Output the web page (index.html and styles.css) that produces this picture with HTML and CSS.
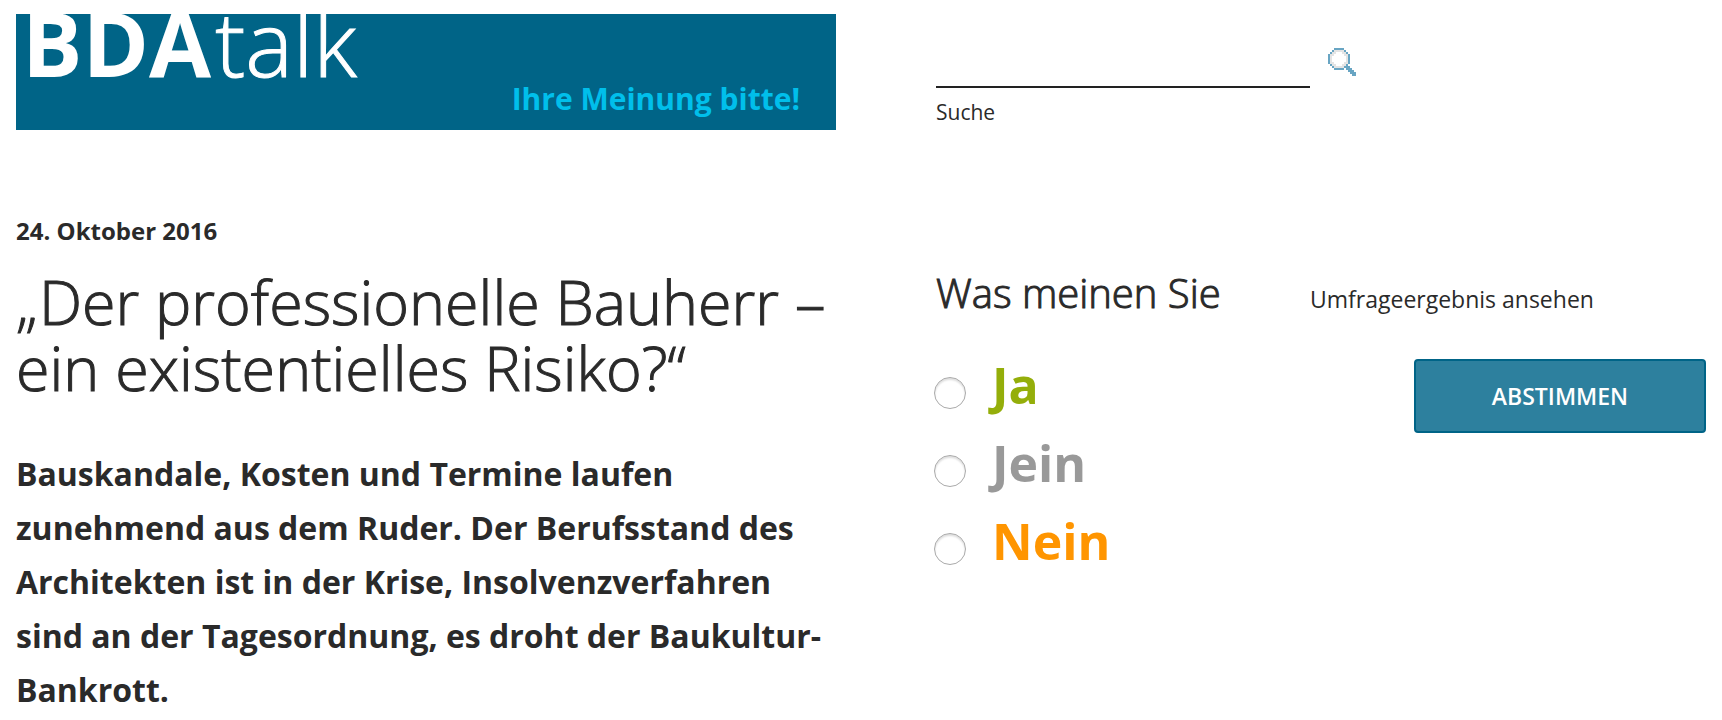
FILE: index.html
```
<!DOCTYPE html>
<html lang="de">
<head>
    <meta charset="UTF-8">
    <meta name="viewport" content="width=device-width, initial-scale=1.0">
    <title>BDA talk</title>
    <link rel="stylesheet" href="styles.css">
</head>
<body>

    <div class="page">
        <header class="banner">
            <a href="#" class="logo"><strong>BDA</strong>talk</a>
            <p class="tagline">Ihre Meinung bitte!</p>
        </header>

        <form class="search">
            <div class="search-row">
                <input type="text" id="search" class="search-input">
                <button type="submit" class="search-button" aria-label="Suchen">
                    <svg width="28" height="28" viewBox="0 0 14 14" shape-rendering="crispEdges">
                        <path fill="#e4e4e4" d="M3 1h5v1h1v1h1v5h-1v1h-1v1h-5v-1h-1v-1h-1v-5h1v-1h1z"/>
                        <path fill="#fff" d="M4 2h3v1h1v1h1v3h-1v1h-1v1h-3v-1h-1v-1h-1v-3h1v-1h1z"/>
                        <path fill="#68a5c3" d="M3 0h5v1h-5zM2 1h1v1h-1zM8 1h1v1h-1zM1 2h1v1h-1zM9 2h1v1h-1zM0 3h1v5h-1zM10 3h1v5h-1zM1 8h1v1h-1zM9 8h1v1h-1zM2 9h1v1h-1zM8 9h1v1h-1zM3 10h5v1h-5zM9 9h2v1h1v1h1v1h1v2h-2v-1h-1v-1h-1v-1h-1z"/>
                    </svg>
                </button>
            </div>
            <label for="search">Suche</label>
        </form>

        <article class="article">
            <p class="date">24. Oktober 2016</p>
            <h1>„Der professionelle Bauherr – ein existentielles Risiko?“</h1>
            <p class="intro">Bauskandale, Kosten und Termine laufen zunehmend aus dem Ruder. Der Berufsstand des Architekten ist in der Krise, Insolvenzverfahren sind an der Tagesordnung, es droht der Baukultur-Bankrott.</p>
        </article>

        <form class="poll">
            <div class="poll-head">
                <h2>Was meinen Sie</h2>
                <a href="#">Umfrageergebnis ansehen</a>
            </div>
            <div class="poll-body">
                <div class="options">
                    <label class="option yes"><input type="radio" name="vote" value="ja"><span>Ja</span></label>
                    <label class="option maybe"><input type="radio" name="vote" value="jein"><span>Jein</span></label>
                    <label class="option no"><input type="radio" name="vote" value="nein"><span>Nein</span></label>
                </div>
                <button type="submit" class="vote-button">ABSTIMMEN</button>
            </div>
        </form>
    </div>

</body>
</html>
```
FILE: styles.css
```
* {
    box-sizing: border-box;
}
body {
    margin: 0;
    font-family: "Open Sans", "Noto Sans", sans-serif;
    font-size: 23px;
    background-color: #fff;
    color: #2a2a2a;
}
h1, h2, p {
    margin: 0;
}
a {
    color: inherit;
    text-decoration: none;
}
.page {
    display: grid;
    grid-template-columns: 820fr 770fr;
    column-gap: 100px;
    row-gap: 77px;
    padding: 14px 16px 0;
}

/* Banner */
.banner {
    height: 116px;
    overflow: hidden;
    background-color: #006487;
}
.logo {
    display: block;
    padding-left: 6px;
    font-size: 90px;
    font-weight: 300;
    line-height: 56px;
    color: #fff;
    -webkit-text-stroke: 1px;
}
.logo strong {
    margin-right: 4px;
    font-weight: 700;
    -webkit-text-stroke: 0;
}
.tagline {
    padding-right: 36px;
    font-size: 30px;
    font-weight: 700;
    line-height: 58px;
    text-align: right;
    color: #00bfeb;
}

/* Search */
.search-row {
    display: flex;
    align-items: center;
    gap: 18px;
}
.search-input {
    width: 374px;
    height: 74px;
    padding: 24px 0 0;
    border: none;
    border-bottom: 2px solid #222;
    font: inherit;
    outline: none;
}
.search-button {
    padding: 22px 0 0;
    border: none;
    background: none;
    cursor: pointer;
}
.search-button svg {
    display: block;
}
.search label {
    display: block;
    font-size: 21px;
    line-height: 48px;
}

/* Article */
.date {
    font-size: 24px;
    font-weight: 700;
    line-height: 36px;
}
h1 {
    margin-top: 20px;
    font-size: 61px;
    font-weight: 300;
    line-height: 66px;
    -webkit-text-stroke: 1px;
}
.intro {
    margin-top: 46px;
    font-size: 32px;
    font-weight: 700;
    line-height: 54px;
}

/* Poll */
.poll {
    padding-top: 56px;
}
.poll-head {
    display: flex;
    align-items: baseline;
}
.poll-head h2 {
    flex: 0 0 374px;
    font-size: 40px;
    font-weight: 300;
    line-height: 48px;
    -webkit-text-stroke: 1px;
}
.poll-body {
    display: flex;
    justify-content: space-between;
    align-items: flex-start;
    margin-top: 42px;
}
.option {
    display: flex;
    align-items: flex-start;
    gap: 26px;
    height: 78px;
    font-size: 50px;
    font-weight: 700;
    line-height: 52px;
    cursor: pointer;
}
.option input {
    appearance: none;
    width: 32px;
    height: 32px;
    margin: 18px 0 0 -2px;
    border: 1px solid #aaa;
    border-radius: 50%;
    box-shadow: inset 0 2px 2px #ddd;
}
.option input:checked {
    background-color: #2d809e;
}
.yes {
    color: #94ae0a;
}
.maybe {
    color: #999;
}
.no {
    color: #ff9500;
}
.vote-button {
    width: 292px;
    height: 74px;
    border: 2px solid #006487;
    border-radius: 4px;
    background-color: #2d809e;
    font: inherit;
    font-weight: 600;
    color: #fff;
    cursor: pointer;
}
```
